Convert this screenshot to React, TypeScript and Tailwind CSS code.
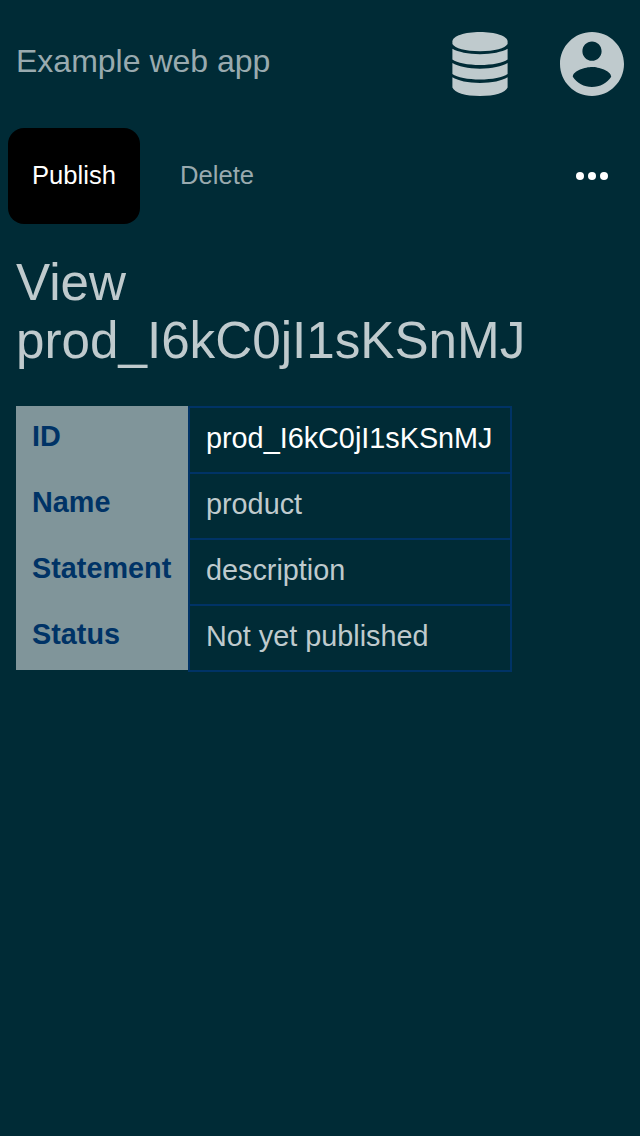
const rows = [
  { label: 'ID', value: 'prod_I6kC0jI1sKSnMJ', link: true },
  { label: 'Name', value: 'product', link: false },
  { label: 'Statement', value: 'description', link: false },
  { label: 'Status', value: 'Not yet published', link: false },
];

function DatabaseIcon() {
  return (
    <svg className="h-16 w-14" viewBox="0 0 56 64" fill="currentColor" aria-hidden="true">
      <path d="M28 0C43 0 55.6 4 55.6 9.5V12C53 16.4 43 19.2 28 19.2S3 16.4 .4 12V9.5C.4 4 13 0 28 0Z" />
      <path d="M.4 16.8C6 20 16 22.2 28 22.2S50 20 55.6 16.8V27.6C51 31 40 33.1 28 33.1S5 31 .4 27.6Z" />
      <path d="M.4 31C6 34.4 16 36.7 28 36.7S50 34.4 55.6 31V42.1C51 45.5 40 47.6 28 47.6S5 45.5 .4 42.1Z" />
      <path d="M.4 45.2C6 48.7 16 50.9 28 50.9S50 48.7 55.6 45.2V55.5C53.5 60.5 43 64 28 64S2.5 60.5 .4 55.5Z" />
    </svg>
  );
}

function AccountIcon() {
  return (
    <svg className="size-16" viewBox="2 2 20 20" fill="currentColor" aria-hidden="true">
      <path d="M12 2C6.48 2 2 6.48 2 12s4.48 10 10 10 10-4.48 10-10S17.52 2 12 2zm0 3c1.66 0 3 1.34 3 3s-1.34 3-3 3-3-1.34-3-3 1.34-3 3-3zm0 14.2c-2.5 0-4.71-1.28-6-3.22.03-1.99 4-3.08 6-3.08 1.99 0 5.97 1.09 6 3.08-1.29 1.94-3.5 3.22-6 3.22z" />
    </svg>
  );
}

export default function App() {
  return (
    <div className="min-h-screen bg-[#002b36] font-['Liberation_Sans',Arial,sans-serif] text-[#bfcacd]">
      <header className="flex h-32 items-center justify-between px-4">
        <a className="pb-1.5 text-[32px] leading-9 text-[#99aaaf]">Example web app</a>
        <div className="flex gap-[52px]">
          <button aria-label="Data"><DatabaseIcon /></button>
          <button aria-label="Account"><AccountIcon /></button>
        </div>
      </header>
      <nav className="flex h-24 items-center pr-8 pl-2 text-[25.6px]">
        <button className="h-24 w-[132px] rounded-2xl bg-black pb-0.5 text-white">Publish</button>
        <button className="ml-10 pb-0.5 text-[#99aaaf]">Delete</button>
        <button className="ml-auto flex gap-1" aria-label="More">
          <span className="size-2 rounded-full bg-white" />
          <span className="size-2 rounded-full bg-white" />
          <span className="size-2 rounded-full bg-white" />
        </button>
      </nav>
      <main className="px-4 pt-[30px]">
        <h1 className="text-[51.2px] leading-[58px]">View<br />prod_I6kC0jI1sKSnMJ</h1>
        <div className="mt-9 flex items-start text-[28.8px] leading-8">
          <div className="w-[172px] bg-[#80959a] font-bold text-[#003366]">
            {rows.map((r) => (
              <div key={r.label} className="h-[66px] px-4 pt-[14px]">{r.label}</div>
            ))}
          </div>
          <div className="w-[324px] border-x-2 border-b-2 border-[#003366]">
            {rows.map((r) => (
              <div key={r.label} className="h-[66px] border-t-2 border-[#003366] px-4 pt-[14px]">
                <span className={r.link ? 'text-white' : ''}>{r.value}</span>
              </div>
            ))}
          </div>
        </div>
      </main>
    </div>
  );
}
